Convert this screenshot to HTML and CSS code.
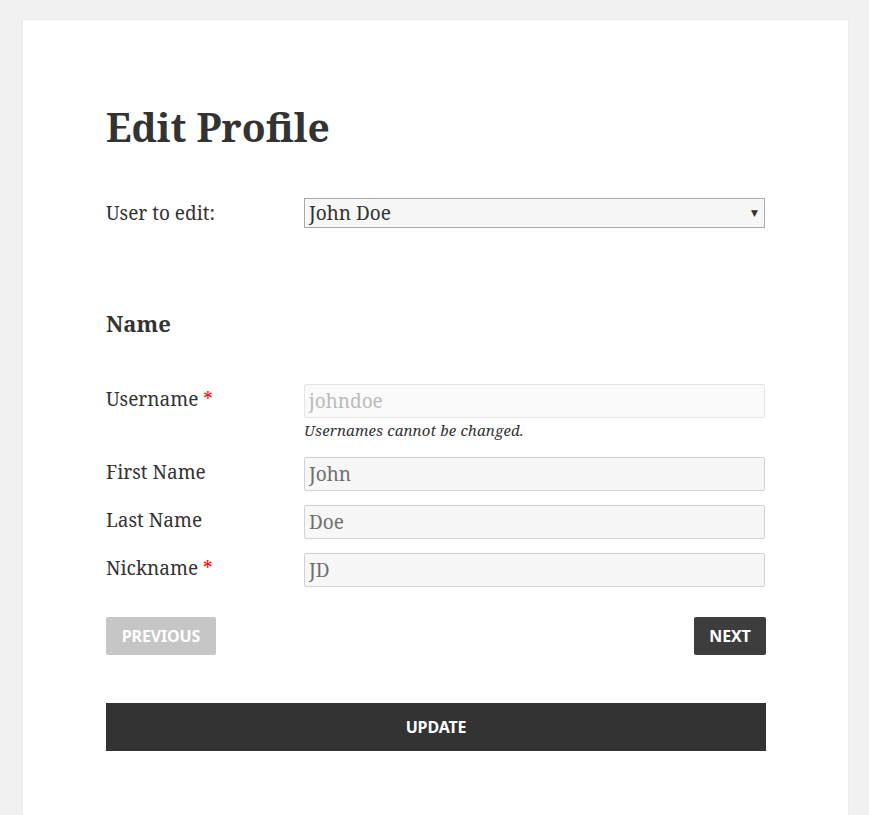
FILE: index.html
```html
<!DOCTYPE html>
<html>
<head>
<meta charset="utf-8">
<link rel="stylesheet" href="styles.css">
</head>
<body>
<main class="card">
  <h1 class="title">Edit Profile</h1>
  <div class="row row-select">
    <label class="label">User to edit:</label>
    <div class="field">
      <div class="select"><span>John Doe</span><span class="caret">▼</span></div>
    </div>
  </div>
  <h2 class="section">Name</h2>
  <div class="row">
    <label class="label">Username <span class="req">*</span></label>
    <div class="field">
      <div class="input disabled">johndoe</div>
      <p class="hint">Usernames cannot be changed.</p>
    </div>
  </div>
  <div class="row">
    <label class="label">First Name</label>
    <div class="field"><div class="input">John</div></div>
  </div>
  <div class="row">
    <label class="label">Last Name</label>
    <div class="field"><div class="input">Doe</div></div>
  </div>
  <div class="row">
    <label class="label">Nickname <span class="req">*</span></label>
    <div class="field"><div class="input">JD</div></div>
  </div>
  <div class="nav">
    <button class="btn btn-prev">Previous</button>
    <button class="btn btn-next">Next</button>
  </div>
  <button class="btn btn-update">Update</button>
</main>
</body>
</html>
```
FILE: styles.css
```css
html, body { margin: 0; padding: 0; }
body {
  background: #f1f1f1;
  font-family: "Noto Serif", "DejaVu Serif", serif;
  color: #333;
  height: 815px;
  overflow: hidden;
}
.card {
  margin: 20px 0 0 23px;
  width: 825px;
  height: 795px;
  background: #fff;
  box-shadow: 0 0 1px rgba(0,0,0,0.15);
  box-sizing: border-box;
  padding: 80px 82px 0 83px;
}
.title {
  margin: 0;
  font-size: 39px;
  line-height: 54px;
  font-weight: 700;
}
.row {
  display: flex;
  margin-top: 15px;
}
.row-select { margin-top: 44px; align-items: center; }
.label {
  width: 198px;
  flex: none;
  font-size: 19px;
  line-height: 30px;
}
.req { color: #f00; }
.field { flex: 1; }
.select {
  height: 30px;
  margin-right: 1px;
  box-sizing: border-box;
  border: 1px solid #a9a9a9;
  background: #f7f7f7;
  display: flex;
  align-items: center;
  justify-content: space-between;
  padding: 0 6px 0 4px;
  font-size: 19px;
  color: #333;
}
.caret { font-size: 9px; font-family: "DejaVu Sans", sans-serif; }
.section {
  margin: 80px 0 46px;
  font-size: 22px;
  line-height: 30px;
  font-weight: 700;
}
.input {
  height: 34px;
  margin-right: 1px;
  box-sizing: border-box;
  border: 1px solid #d1d1d1;
  border-radius: 2px;
  background: #f7f7f7;
  font-size: 19px;
  line-height: 32px;
  padding: 0 4px;
  color: #707070;
}
.input.disabled { background: #fafafa; border-color: #e5e5e5; color: #bbb; }
.hint {
  margin: 1px 0 2px;
  font-size: 15px;
  font-style: italic;
  line-height: 22px;
  letter-spacing: 0.01em;
}
.row + .row { margin-top: 14px; }
.nav {
  display: flex;
  justify-content: space-between;
  margin-top: 30px;
}
.btn {
  border: 0;
  border-radius: 2px;
  font-family: "Noto Sans", sans-serif;
  font-weight: 700;
  font-size: 16px;
  text-transform: uppercase;
  color: #fff;
  height: 38px;
  padding: 0;
  letter-spacing: -0.01em;
}
.btn-prev { background: #c6c6c6; width: 110px; }
.btn-next { background: #3d3d3d; width: 72px; }
.btn-update {
  display: block;
  width: 100%;
  height: 48px;
  margin-top: 48px;
  background: #333;
  border-radius: 0;
}
```
